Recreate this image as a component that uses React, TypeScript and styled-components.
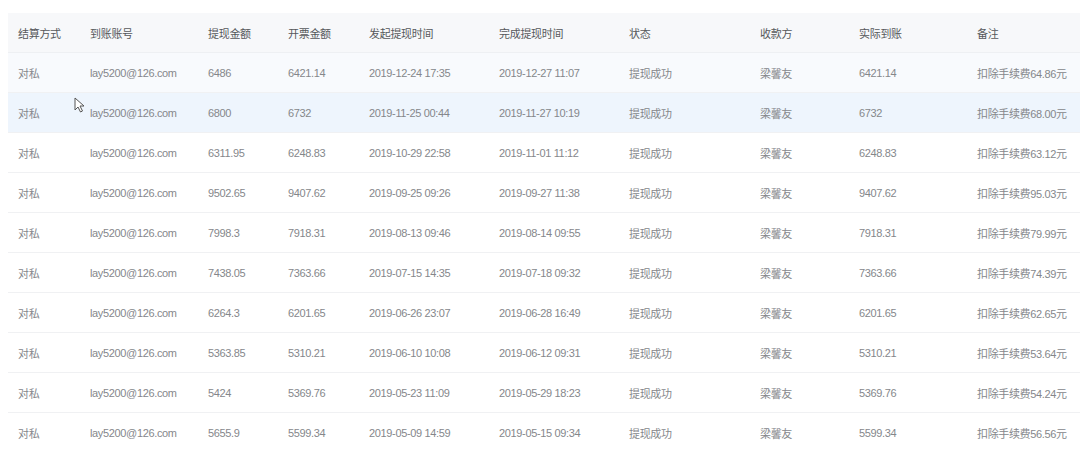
import React from "react";
import styled, { createGlobalStyle } from "styled-components";

const Global = createGlobalStyle`
  html, body { margin: 0; padding: 0; background: #ffffff; }
  body { font-family: "Liberation Sans", "Noto Sans CJK SC", sans-serif; }
`;

const cols = "72px 118px 80px 81px 130px 130px 131px 99px 118px 1fr";

const Page = styled.div`
  width: 1080px;
  height: 452px;
  overflow: hidden;
  padding: 13px 0 0 8px;
  box-sizing: border-box;
  position: relative;
  background: #fff;
`;

const Table = styled.div`
  display: flex;
  flex-direction: column;
`;

const HeaderRow = styled.div`
  display: grid;
  grid-template-columns: ${cols};
  height: 40px;
  align-items: center;
  background: #f7f8fa;
  border-bottom: 1px solid #eef0f3;
  box-sizing: border-box;
`;

const Row = styled.div<{ $bg?: string }>`
  display: grid;
  grid-template-columns: ${cols};
  height: 40px;
  align-items: center;
  background: ${(p) => p.$bg || "#fff"};
  border-bottom: 1px solid #f0f1f3;
  box-sizing: border-box;
`;

const HCell = styled.div`
  padding-left: 10px;
  font-size: 11px;
  letter-spacing: -0.3px;
  color: #56585c;
  white-space: nowrap;
`;

const Cell = styled.div`
  padding-left: 10px;
  font-size: 11px;
  letter-spacing: -0.35px;
  color: #85878b;
  white-space: nowrap;
`;

const Cursor = styled.svg`
  position: absolute;
  left: 74px;
  top: 97px;
`;

const headers = ["结算方式", "到账账号", "提现金额", "开票金额", "发起提现时间", "完成提现时间", "状态", "收款方", "实际到账", "备注"];

const data = [
  ["6486", "6421.14", "2019-12-24 17:35", "2019-12-27 11:07", "64.86"],
  ["6800", "6732", "2019-11-25 00:44", "2019-11-27 10:19", "68.00"],
  ["6311.95", "6248.83", "2019-10-29 22:58", "2019-11-01 11:12", "63.12"],
  ["9502.65", "9407.62", "2019-09-25 09:26", "2019-09-27 11:38", "95.03"],
  ["7998.3", "7918.31", "2019-08-13 09:46", "2019-08-14 09:55", "79.99"],
  ["7438.05", "7363.66", "2019-07-15 14:35", "2019-07-18 09:32", "74.39"],
  ["6264.3", "6201.65", "2019-06-26 23:07", "2019-06-28 16:49", "62.65"],
  ["5363.85", "5310.21", "2019-06-10 10:08", "2019-06-12 09:31", "53.64"],
  ["5424", "5369.76", "2019-05-23 11:09", "2019-05-29 18:23", "54.24"],
  ["5655.9", "5599.34", "2019-05-09 14:59", "2019-05-15 09:34", "56.56"],
];

const rowBg = (i: number) => (i === 0 ? "#f8fafd" : i === 1 ? "#eef5fd" : "#fff");

export default function App() {
  return (
    <Page>
      <Global />
      <Table>
        <HeaderRow>
          {headers.map((h) => (
            <HCell key={h}>{h}</HCell>
          ))}
        </HeaderRow>
        {data.map((d, i) => (
          <Row key={i} $bg={rowBg(i)}>
            <Cell>对私</Cell>
            <Cell>lay5200@126.com</Cell>
            <Cell>{d[0]}</Cell>
            <Cell>{d[1]}</Cell>
            <Cell>{d[2]}</Cell>
            <Cell>{d[3]}</Cell>
            <Cell>提现成功</Cell>
            <Cell>梁馨友</Cell>
            <Cell>{d[1]}</Cell>
            <Cell>扣除手续费{d[4]}元</Cell>
          </Row>
        ))}
      </Table>
      <Cursor width="12" height="16" viewBox="0 0 12 16">
        <path d="M1 1 L1 13 L4 10 L6.5 15 L8.5 14 L6 9 L10 9 Z" fill="#fff" stroke="#555" strokeWidth="1" strokeLinejoin="round" />
      </Cursor>
    </Page>
  );
}
